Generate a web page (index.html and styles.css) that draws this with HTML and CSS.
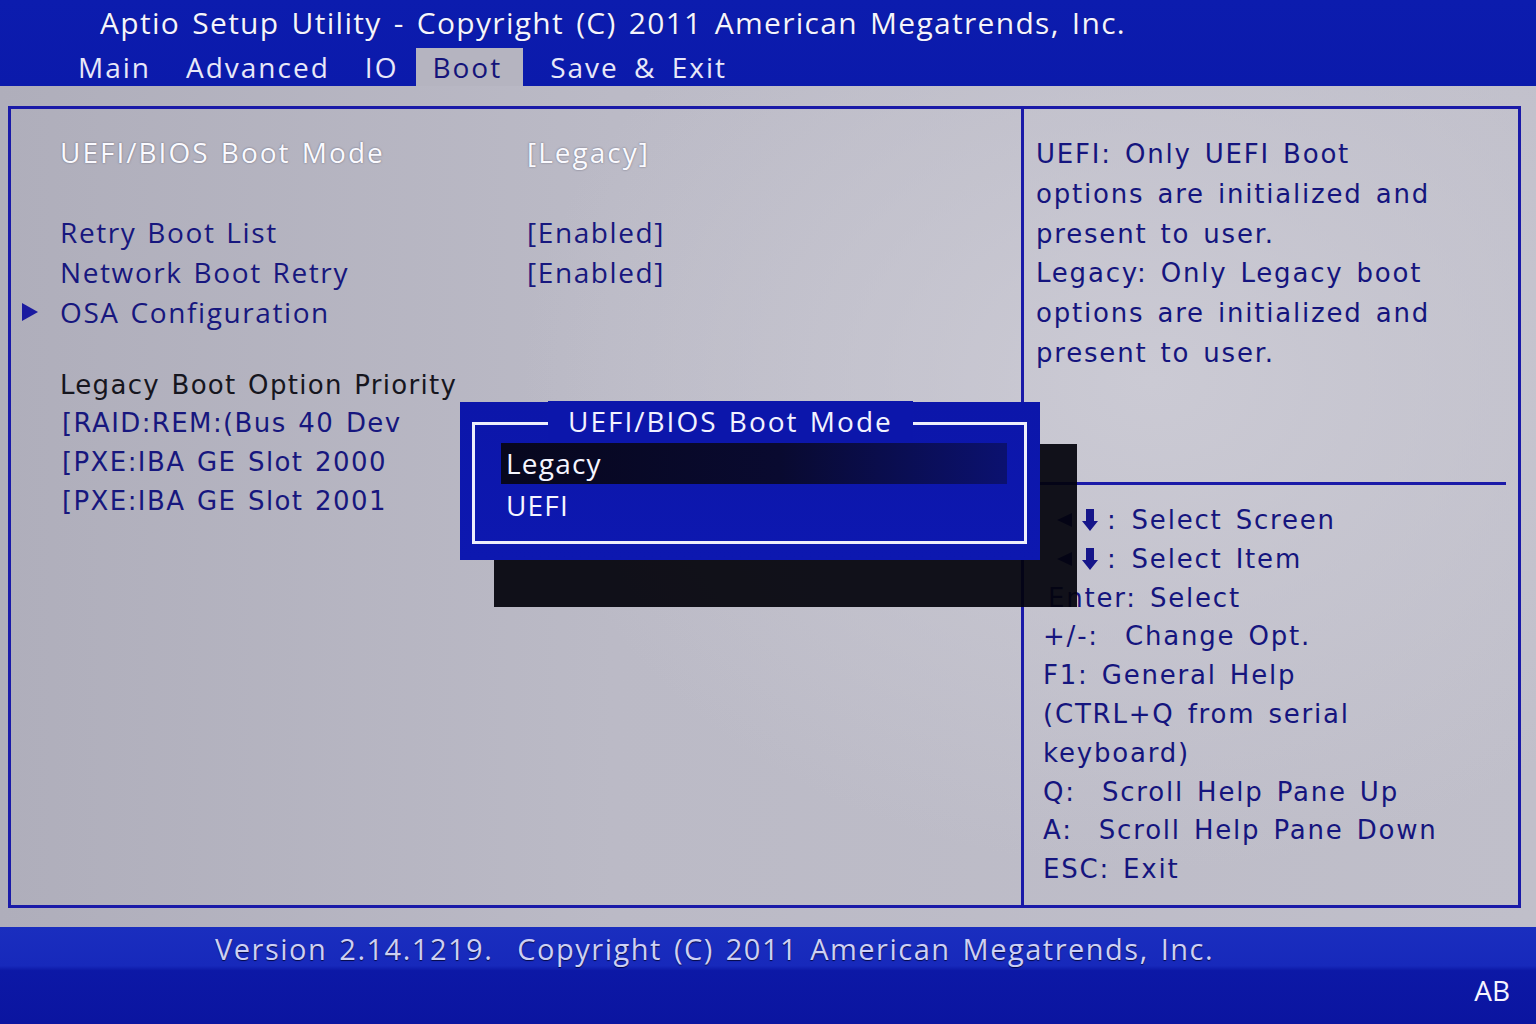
FILE: index.html
```html
<!DOCTYPE html>
<html lang="en">
<head>
<meta charset="utf-8">
<title>Aptio Setup Utility</title>
<link rel="stylesheet" href="styles.css">
</head>
<body>
<header class="topbar">
  <div class="title">Aptio Setup Utility - Copyright (C) 2011 American Megatrends, Inc.</div>
  <nav class="tabs">
    <span class="tab">Main</span>
    <span class="tab">Advanced</span>
    <span class="tab">IO</span>
    <span class="tab active">Boot</span>
    <span class="tab wide">Save &amp; Exit</span>
  </nav>
</header>

<main class="stage">
  <div class="frame">
    <section class="left">
      <div class="row sel"><span class="mark"></span><span class="label">UEFI/BIOS Boot Mode</span><span class="value">[Legacy]</span></div>
      <div class="row spacer"></div>
      <div class="row"><span class="mark"></span><span class="label">Retry Boot List</span><span class="value">[Enabled]</span></div>
      <div class="row"><span class="mark"></span><span class="label">Network Boot Retry</span><span class="value">[Enabled]</span></div>
      <div class="row"><span class="mark"><svg class="tri" width="16" height="18" viewBox="0 0 16 18"><polygon points="0,0 16,9 0,18" fill="#1b1ba0"/></svg></span><span class="label">OSA Configuration</span><span class="value"></span></div>
      <div class="prio-head">Legacy Boot Option Priority</div>
      <div class="prio">[RAID:REM:(Bus 40 Dev</div>
      <div class="prio">[PXE:IBA GE Slot 2000</div>
      <div class="prio">[PXE:IBA GE Slot 2001</div>
    </section>
    <div class="divider"></div>
    <aside class="help">
      <div class="desc">
        <div>UEFI: Only UEFI Boot</div>
        <div>options are initialized and</div>
        <div>present to user.</div>
        <div>Legacy: Only Legacy boot</div>
        <div>options are initialized and</div>
        <div>present to user.</div>
      </div>
      <div class="rule"></div>
      <div class="keys">
        <div class="k arrows"><svg width="50" height="24" viewBox="0 0 50 24"><polygon points="15,5 15,19 0,12" fill="#16168a"/><path d="M29 1 h8 v12 h4 l-8 10 l-8 -10 h4 z" fill="#16168a"/></svg><span class="colon">:</span>Select Screen</div>
        <div class="k arrows"><svg width="50" height="24" viewBox="0 0 50 24"><polygon points="15,5 15,19 0,12" fill="#16168a"/><path d="M29 1 h8 v12 h4 l-8 10 l-8 -10 h4 z" fill="#16168a"/></svg><span class="colon">:</span>Select Item</div>
        <div class="k enter">Enter: Select</div>
        <div class="k">+/-:&nbsp; Change Opt.</div>
        <div class="k">F1: General Help</div>
        <div class="k">(CTRL+Q from serial</div>
        <div class="k">keyboard)</div>
        <div class="k">Q:&nbsp; Scroll Help Pane Up</div>
        <div class="k">A:&nbsp; Scroll Help Pane Down</div>
        <div class="k">ESC: Exit</div>
      </div>
    </aside>
  </div>

  <div class="popup-shadow"></div>
  <div class="popup">
    <div class="popup-box">
      <span class="popup-title">UEFI/BIOS Boot Mode</span>
      <div class="opt current">Legacy</div>
      <div class="opt">UEFI</div>
    </div>
  </div>
</main>

<footer class="bottombar">
  <div class="version">Version 2.14.1219.&nbsp; Copyright (C) 2011 American Megatrends, Inc.</div>
  <div class="ab">AB</div>
</footer>
</body>
</html>
```

FILE: styles.css
```css
* { box-sizing: border-box; }

html, body {
  margin: 0;
  padding: 0;
}

body {
  width: 1536px;
  height: 1024px;
  overflow: hidden;
  font-family: "Open Sans", "Noto Sans", sans-serif;
  background: #b8b7c4;
  display: flex;
  flex-direction: column;
}

/* ---------- top bar ---------- */
.topbar {
  height: 86px;
  background: linear-gradient(#0c1cae, #0b1aab);
  color: #f4f4ff;
  display: flex;
  flex-direction: column;
}

.title {
  height: 48px;
  padding-left: 100px;
  font-size: 30px;
  line-height: 46px;
  letter-spacing: 1.3px;
  word-spacing: 3px;
  text-shadow: 0 0 1px rgba(0,0,40,.6);
}

.tabs {
  display: flex;
  height: 38px;
  padding-left: 61px;
  gap: 1px;
}

.tab {
  padding: 0 17px;
  font-size: 28px;
  line-height: 38px;
  letter-spacing: 2px;
  color: #e8e8f8;
}

.tab.active {
  background: #b5b4c0;
  color: #14147a;
  padding: 0 21px 0 16px;
}

.tab.wide {
  padding-left: 26px;
  word-spacing: 6px;
}

/* ---------- stage ---------- */
.stage {
  position: relative;
  height: 841px;
  padding: 20px 15px 19px 8px;
  background:
    radial-gradient(ellipse 900px 700px at 75% 35%, #cbcad4 0%, rgba(203,202,212,0) 70%),
    linear-gradient(90deg, #afaebb 0%, #bbbac6 40%, #c0bfca 100%);
}

.frame {
  height: 802px;
  border: 3px solid #1a1aa8;
  display: grid;
  grid-template-columns: 1010px 3px 1fr;
}

.divider {
  background: #1a1aa8;
}

/* ---------- left column ---------- */
.left {
  padding: 23px 0 0 9px;
}

.row {
  display: grid;
  grid-template-columns: 40px 467px auto;
  height: 40px;
  line-height: 40px;
  font-size: 28px;
  letter-spacing: 1.6px;
  word-spacing: 2px;
  color: #17177e;
}

.row.sel {
  color: #fafaff;
  letter-spacing: 2px;
  text-shadow: 0 0 2px rgba(40,40,60,.55);
}

.mark {
  display: flex;
  align-items: center;
  padding-left: 2px;
}

.prio-head {
  margin-top: 34px;
  padding-left: 40px;
  height: 36px;
  line-height: 38px;
  font-family: "DejaVu Sans", sans-serif;
  font-size: 26px;
  letter-spacing: 1.3px;
  word-spacing: 2px;
  color: #16161e;
}

.prio {
  padding-left: 42px;
  height: 39px;
  line-height: 43px;
  font-family: "DejaVu Sans", sans-serif;
  font-size: 26px;
  letter-spacing: 1.4px;
  word-spacing: 2px;
  color: #17177e;
}

/* ---------- right help ---------- */
.help {
  display: flex;
  flex-direction: column;
  font-family: "DejaVu Sans", sans-serif;
  font-size: 26px;
  letter-spacing: 1.8px;
  word-spacing: 3px;
  color: #15157e;
}

.desc {
  height: 373px;
  padding: 26px 0 0 12px;
  line-height: 39.8px;
}

.rule {
  height: 3px;
  margin: 0 12px 0 12px;
  background: #1a1aa8;
}

.keys {
  padding: 16px 0 0 19px;
  line-height: 38.8px;
}

.k {
  height: 38.8px;
  white-space: nowrap;
}

.k.arrows {
  display: flex;
  align-items: center;
  padding-left: 14px;
}

.colon {
  margin: 0 14px 0 0;
}

.k.enter {
  padding-left: 5px;
}

/* ---------- popup ---------- */
.popup-shadow {
  position: absolute;
  left: 494px;
  top: 358px;
  width: 583px;
  height: 163px;
  background: rgba(3, 3, 12, 0.93);
}

.popup {
  position: absolute;
  left: 460px;
  top: 316px;
  width: 580px;
  height: 158px;
  padding: 20px 13px 16px 12px;
  background: linear-gradient(#0c16aa, #0d18b0);
}

.popup-box {
  position: relative;
  height: 122px;
  border: 3px solid #eeeefc;
  padding: 18px 17px 0 26px;
}

.popup-title {
  position: absolute;
  left: 73px;
  top: -24px;
  padding: 0 20px;
  background: #0c16ab;
  color: #f2f2ff;
  font-size: 28px;
  line-height: 40px;
  letter-spacing: 2px;
  word-spacing: 2px;
}

.opt {
  height: 42px;
  line-height: 42px;
  padding-left: 5px;
  font-size: 28px;
  letter-spacing: 1.2px;
  color: #f6f6ff;
}

.opt.current {
  height: 41px;
  line-height: 41px;
  background: linear-gradient(90deg, #07071e 0%, #090a30 55%, #0b1170 100%);
}

/* ---------- bottom bar ---------- */
.bottombar {
  height: 97px;
  background: linear-gradient(#1a2ebf 0%, #1729bb 40%, #0c18a6 45%, #0b15a0 100%);
  position: relative;
}

.version {
  padding-left: 215px;
  height: 44px;
  line-height: 44px;
  font-size: 29px;
  letter-spacing: 1.5px;
  word-spacing: 3px;
  color: #cdd0f4;
  text-shadow: 0 1px 1px rgba(0,0,40,.8);
}

.ab {
  text-align: right;
  padding-right: 26px;
  font-size: 28px;
  line-height: 38px;
  color: #f4f4ff;
}
```
